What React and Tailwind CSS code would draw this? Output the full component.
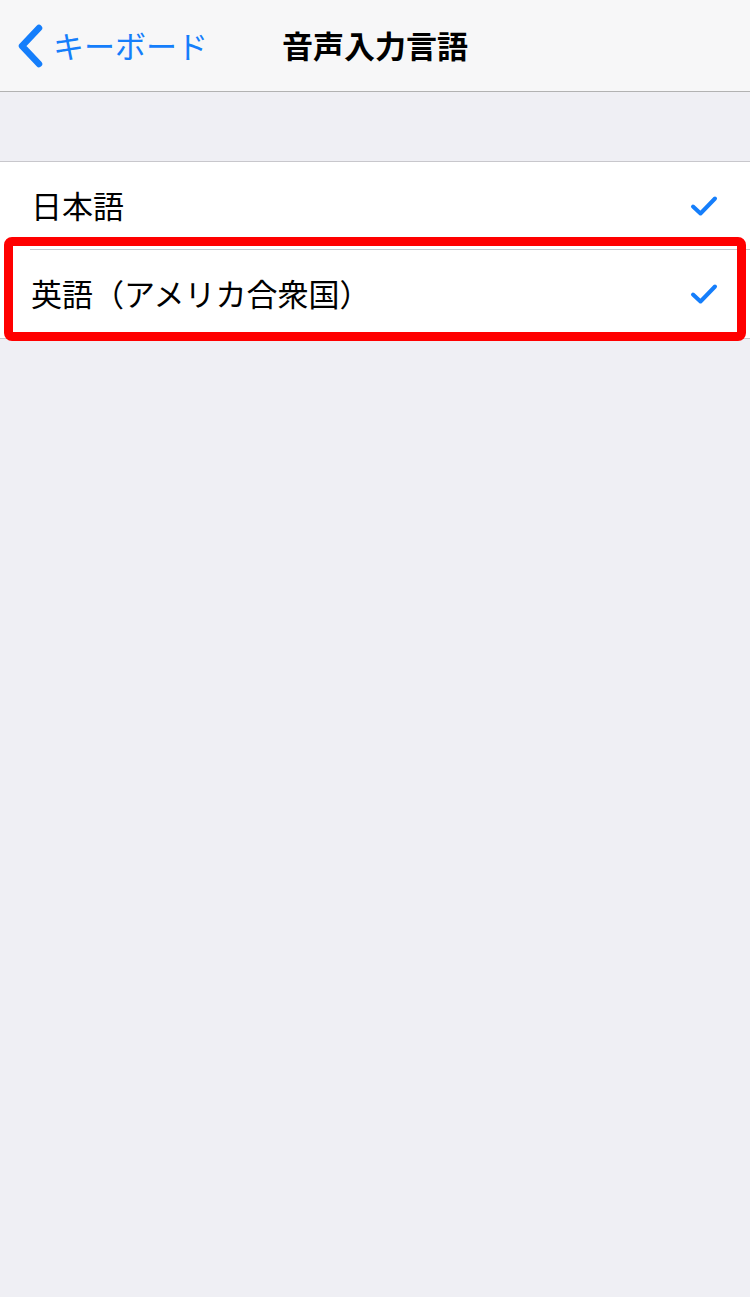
import React from 'react';

const font = { fontFamily: '"Noto Sans CJK JP", "Noto Sans", sans-serif' };

const Check = () => (
  <svg width="28" height="22" viewBox="0 0 28 22" fill="none">
    <path d="M3 11.5 L10.5 18.5 L25 3.5" stroke="#157efb" strokeWidth="4" strokeLinecap="round" strokeLinejoin="round" />
  </svg>
);

const Row = ({ label, divider }) => (
  <div className="relative h-[88px] flex items-center justify-between pl-[31px] pr-[32px]">
    <span className="text-[31px] text-black leading-none pb-[4px]">{label}</span>
    <Check />
    {divider && <div className="absolute bottom-0 left-[30px] right-0 h-px bg-[#c8c7cc]" />}
  </div>
);

export default function App() {
  return (
    <div className="relative w-[750px] h-[1297px] bg-[#efeff4] overflow-hidden" style={font}>
      {/* Navigation bar */}
      <header className="h-[92px] bg-[#f7f7f8] border-b border-[#b2b2b2] flex items-center relative">
        <div className="flex items-center pl-[17px] text-[#157efb]">
          <svg width="28" height="44" viewBox="0 0 28 44" fill="none">
            <path d="M22 4 L5 22 L22 40" stroke="#157efb" strokeWidth="6.5" strokeLinecap="round" strokeLinejoin="round" />
          </svg>
          <span className="text-[31px] leading-none ml-[8px] pb-[2px]">キーボード</span>
        </div>
        <h1 className="absolute left-0 right-0 text-center text-[31px] font-bold leading-none text-black pointer-events-none pb-[2px]">
          音声入力言語
        </h1>
      </header>

      {/* Section spacing */}
      <div className="h-[69px]" />

      {/* List */}
      <div className="bg-white border-t border-b border-[#c8c7cc]">
        <Row label="日本語" divider />
        <Row label="英語（アメリカ合衆国）" />
      </div>

      {/* Highlight annotation */}
      <div className="absolute left-[4px] top-[237px] w-[742px] h-[104px] border-[9px] border-[#ff0000] rounded-[8px]" />
    </div>
  );
}
